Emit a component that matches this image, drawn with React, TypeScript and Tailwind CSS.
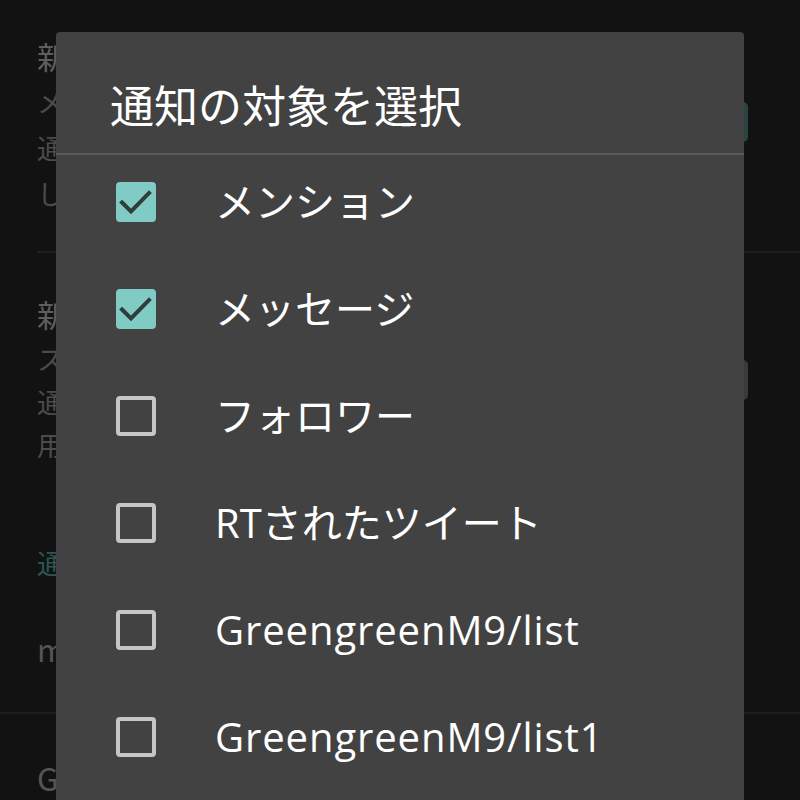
import React from "react";

const font = { fontFamily: '"Noto Sans CJK JP", "Noto Sans", sans-serif' };
const itemFont = { fontFamily: '"Open Sans", "Noto Sans CJK JP", sans-serif' };

function Checked() {
  return (
    <div className="w-[40px] h-[40px] rounded-[4px] bg-[#80cbc4] shrink-0">
      <svg width="40" height="40" viewBox="0 0 40 40">
        <path d="M6 20.5 L15 29.5 L33 11" fill="none" stroke="#2f3d3c" strokeWidth="4" strokeLinecap="square" />
      </svg>
    </div>
  );
}

function Unchecked() {
  return <div className="w-[40px] h-[40px] rounded-[4px] border-[4px] border-[#c6c6c6] shrink-0" />;
}

const items: { label: string; checked: boolean; wide?: boolean }[] = [
  { label: "メンション", checked: true },
  { label: "メッセージ", checked: true },
  { label: "フォロワー", checked: false },
  { label: "RTされたツイート", checked: false },
  { label: "GreengreenM9/list", checked: false, wide: true },
  { label: "GreengreenM9/list1", checked: false, wide: true },
];

export default function App() {
  return (
    <div className="relative w-[800px] h-[800px] overflow-hidden bg-[#121212]" style={font}>
      {/* background settings screen (dimmed) */}
      <div className="flex flex-col pl-[37px]">
        <div className="flex items-center justify-between pt-[33px] pb-[34px] pr-[52px] border-b-2 border-[#1f1f1f]">
          <div className="flex flex-col">
            <div className="text-[31px] leading-[46px] text-[#5e5e5e]">新着通知</div>
            <div className="text-[27px] leading-[46px] text-[#4b4b4b]">メンション・メッセージを</div>
            <div className="text-[27px] leading-[46px] text-[#4b4b4b]">通知します</div>
            <div className="text-[27px] leading-[46px] text-[#4b4b4b]">しばらくお待ちください</div>
          </div>
          <div className="w-[40px] h-[40px] rounded-[5px] bg-[#2c4441] -mt-[6px]" />
        </div>
        <div className="flex items-center justify-between pt-[38px] pb-[50px] pr-[52px]">
          <div className="flex flex-col">
            <div className="text-[31px] leading-[46px] text-[#5e5e5e]">新着ツイート通知</div>
            <div className="text-[27px] leading-[44px] text-[#4b4b4b]">ストリーミングで</div>
            <div className="text-[27px] leading-[42px] text-[#4b4b4b]">通知します</div>
            <div className="text-[27px] leading-[44px] text-[#4b4b4b]">用途に応じて</div>
          </div>
          <div className="w-[40px] h-[40px] rounded-[5px] bg-[#3a3a3a] mt-[2px]" />
        </div>
        <div className="text-[27px] leading-[46px] text-[#2f5552] pt-[23px]">通知設定</div>
        <div className="text-[31px] leading-[46px] text-[#555555] pt-[40px] pb-[40px]">mention</div>
        <div className="border-t-2 border-[#1f1f1f] -ml-[37px]" />
        <div className="text-[31px] leading-[46px] text-[#555555] pt-[41px]">GreengreenM9</div>
      </div>

      {/* dialog */}
      <div className="absolute left-[56px] top-[32px] w-[688px] h-[768px] bg-[#424242] rounded-t-[4px] flex flex-col">
        <div className="px-[54px] pt-[47px] pb-[24px] text-[44px] leading-[50px] text-white">通知の対象を選択</div>
        <div className="h-[2px] bg-[#5a5a5a]" />
        <div className="flex-1 overflow-hidden">
          <div className="flex flex-col -mt-[7px]">
            {items.map((it) => (
              <div key={it.label} className="h-[107px] flex items-center pl-[60px] gap-[59px] shrink-0">
                {it.checked ? <Checked /> : <Unchecked />}
                <span
                  className={
                    it.wide
                      ? "text-[40px] leading-[50px] text-white whitespace-nowrap tracking-[0.9px]"
                      : "text-[40px] leading-[50px] text-white whitespace-nowrap"
                  }
                  style={itemFont}
                >
                  {it.label}
                </span>
              </div>
            ))}
          </div>
        </div>
      </div>
    </div>
  );
}
